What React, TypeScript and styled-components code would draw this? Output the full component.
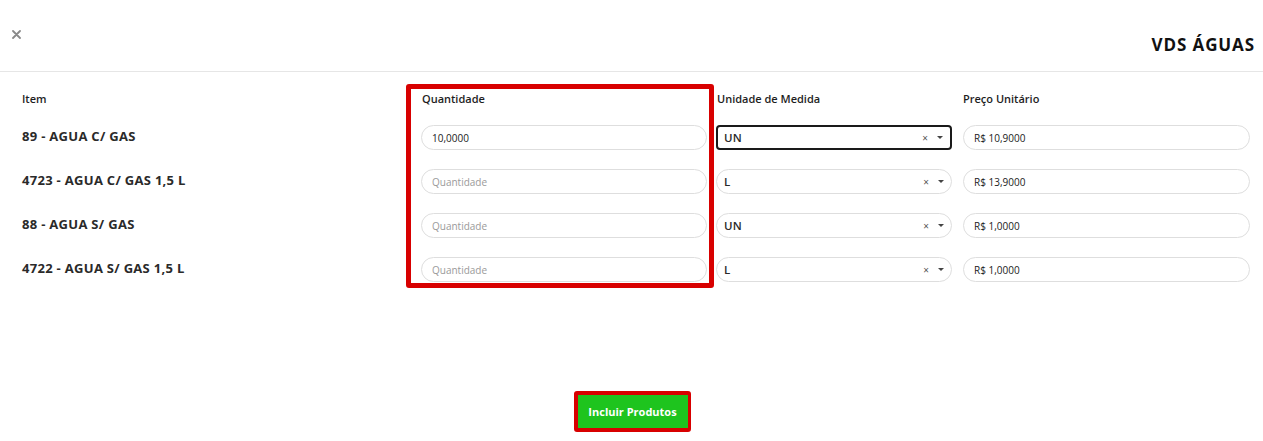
import React from "react";
import styled, { createGlobalStyle } from "styled-components";

const Global = createGlobalStyle`
  html, body { margin: 0; padding: 0; background: #ffffff; }
  body { font-family: "Open Sans", "Liberation Sans", sans-serif; color: #222; }
  * { box-sizing: border-box; }
`;

const Modal = styled.div`
  width: 1263px;
  height: 441px;
  background: #fff;
  display: flex;
  flex-direction: column;
`;

const Header = styled.header`
  height: 72px;
  border-bottom: 1px solid #e6e6e6;
  display: flex;
  justify-content: space-between;
  padding: 0 8px 0 9px;
`;

const CloseButton = styled.button`
  align-self: flex-start;
  margin-top: 27px;
  width: 14px;
  height: 14px;
  padding: 0;
  border: none;
  background: transparent;
  display: flex;
  align-items: center;
  justify-content: center;
  cursor: pointer;
`;

const Title = styled.h2`
  align-self: flex-end;
  margin: 0 0 16px 0;
  font-size: 17px;
  line-height: 20px;
  font-weight: 700;
  color: #111;
  letter-spacing: 0.9px;
`;

const Body = styled.div`
  display: flex;
  padding: 12px 13px 0 22px;
`;

const Column = styled.div<{ $width?: number; $pl?: number; $pr?: number; $highlight?: boolean }>`
  display: flex;
  flex-direction: column;
  ${(p) => (p.$width ? `width: ${p.$width}px; flex: none;` : "flex: 1;")}
  padding: ${(p) => (p.$highlight ? "0" : "5px")} ${(p) => p.$pr ?? 0}px
    ${(p) => (p.$highlight ? "1px" : "6px")} ${(p) => p.$pl ?? 0}px;
  border: ${(p) => (p.$highlight ? "5px solid #d80000" : "none")};
  border-radius: ${(p) => (p.$highlight ? "3px" : "0")};
`;

const HeadCell = styled.div<{ $indent?: number }>`
  height: 20px;
  line-height: 20px;
  font-size: 11px;
  font-weight: 600;
  color: #1e1e1e;
  margin-bottom: 16px;
  padding-left: ${(p) => p.$indent ?? 0}px;
  white-space: nowrap;
`;

const Cells = styled.div`
  display: flex;
  flex-direction: column;
  gap: 19px;
`;

const ItemLabel = styled.div`
  height: 25px;
  display: flex;
  align-items: center;
  font-size: 13px;
  font-weight: 700;
  color: #2a2a2a;
  letter-spacing: 0.3px;
  white-space: nowrap;
  margin-top: -2px;
  margin-bottom: 2px;
`;

const TextInput = styled.input`
  height: 25px;
  width: 100%;
  border: 1px solid #dedede;
  border-radius: 13px;
  padding: 0 10px;
  font-family: inherit;
  font-size: 10px;
  font-weight: 500;
  color: #222;
  background: #fff;
  outline: none;
  &::placeholder { color: #9a9a9a; }
`;

const Select = styled.div<{ $focused?: boolean }>`
  height: 25px;
  display: flex;
  align-items: center;
  padding: 0 7px;
  border: ${(p) => (p.$focused ? "2px solid #1a1a1a" : "1px solid #dedede")};
  border-radius: ${(p) => (p.$focused ? "4px" : "13px")};
  padding-left: ${(p) => (p.$focused ? "6px" : "7px")};
  background: #fff;
`;

const SelectValue = styled.span`
  flex: 1;
  font-size: 11.5px;
  font-weight: 600;
  color: #2a2a2a;
  letter-spacing: 0.3px;
`;

const ClearMark = styled.span`
  font-size: 10px;
  color: #555;
  margin-right: 9px;
  line-height: 1;
`;

const Caret = styled.span`
  width: 0;
  height: 0;
  border-left: 3px solid transparent;
  border-right: 3px solid transparent;
  border-top: 3px solid #444;
`;

const Footer = styled.div`
  display: flex;
  justify-content: center;
  margin-top: 103px;
  padding-left: 1px;
`;

const Highlight = styled.div`
  border: 4px solid #d80000;
  border-right-width: 3px;
  border-radius: 3px;
  display: flex;
`;

const PrimaryButton = styled.button`
  width: 110px;
  height: 33px;
  border: none;
  background: #1ec41e;
  color: #fff;
  font-family: inherit;
  font-size: 11px;
  font-weight: 700;
  cursor: pointer;
`;

const rows = [
  { item: "89 - AGUA C/ GAS", qty: "10,0000", unit: "UN", price: "R$ 10,9000" },
  { item: "4723 - AGUA C/ GAS 1,5 L", qty: "", unit: "L", price: "R$ 13,9000" },
  { item: "88 - AGUA S/ GAS", qty: "", unit: "UN", price: "R$ 1,0000" },
  { item: "4722 - AGUA S/ GAS 1,5 L", qty: "", unit: "L", price: "R$ 1,0000" },
];

export default function App() {
  return (
    <>
      <Global />
      <Modal>
        <Header>
          <CloseButton aria-label="Fechar">
            <svg width="9" height="9" viewBox="0 0 9 9">
              <path d="M1 1 L8 8 M8 1 L1 8" stroke="#8a8a8a" strokeWidth="1.8" strokeLinecap="round" />
            </svg>
          </CloseButton>
          <Title>VDS ÁGUAS</Title>
        </Header>
        <Body>
          <Column $width={384}>
            <HeadCell>Item</HeadCell>
            <Cells>
              {rows.map((r) => (
                <ItemLabel key={r.item}>{r.item}</ItemLabel>
              ))}
            </Cells>
          </Column>
          <Column $width={308} $pl={10} $pr={2} $highlight>
            <HeadCell $indent={1}>Quantidade</HeadCell>
            <Cells>
              {rows.map((r) => (
                <TextInput key={r.item} defaultValue={r.qty} placeholder="Quantidade" />
              ))}
            </Cells>
          </Column>
          <Column $width={249} $pl={2} $pr={11}>
            <HeadCell $indent={1}>Unidade de Medida</HeadCell>
            <Cells>
              {rows.map((r, i) => (
                <Select key={r.item} $focused={i === 0}>
                  <SelectValue>{r.unit}</SelectValue>
                  <ClearMark>×</ClearMark>
                  <Caret />
                </Select>
              ))}
            </Cells>
          </Column>
          <Column>
            <HeadCell>Preço Unitário</HeadCell>
            <Cells>
              {rows.map((r) => (
                <TextInput key={r.item} defaultValue={r.price} />
              ))}
            </Cells>
          </Column>
        </Body>
        <Footer>
          <Highlight>
            <PrimaryButton>Incluir Produtos</PrimaryButton>
          </Highlight>
        </Footer>
      </Modal>
    </>
  );
}
